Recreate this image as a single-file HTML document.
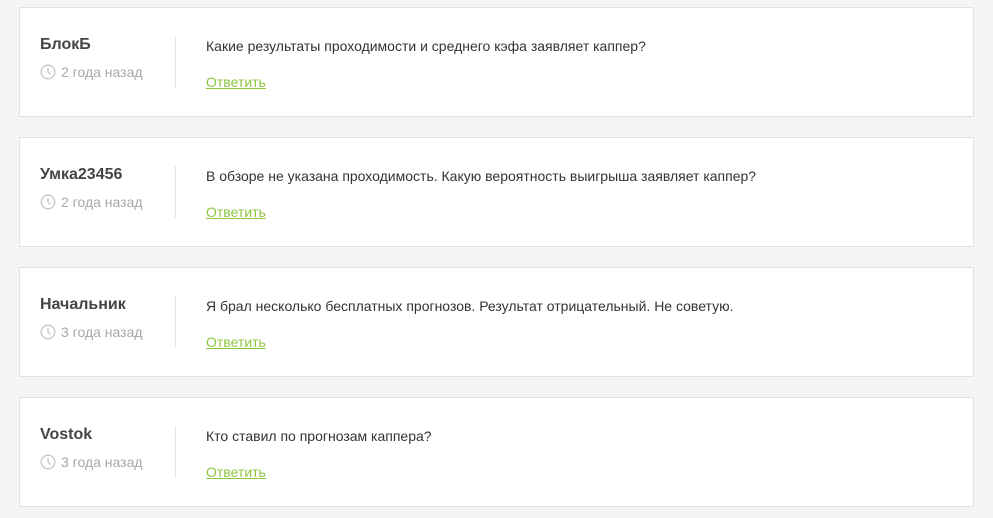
<!DOCTYPE html>
<html><head><meta charset="utf-8"><style>
body{margin:0;background:#f5f5f5;font-family:"Liberation Sans","Noto Sans CJK SC",sans-serif;width:993px;height:518px;overflow:hidden}
.card{position:absolute;left:19px;width:953px;height:108px;background:#fff;border:1px solid #e2e2e2}
.name{position:absolute;left:20px;top:28px;font-size:16px;font-weight:bold;color:#444}
.time{position:absolute;left:20px;top:56px;font-size:14px;color:#a8a8a8;display:flex;align-items:center}
.time svg{margin-right:5px}
.div{position:absolute;left:155px;top:28px;width:1px;height:52px;background:#e5e5e5}
.text{position:absolute;left:186px;top:30px;font-size:14px;color:#333}
.reply{position:absolute;left:186px;top:66px;font-size:14px;color:#8cc63f;text-decoration:underline}
</style></head><body>
<div class="card" style="top:7px"><div class="name">БлокБ</div><div class="time"><svg width="16" height="16" viewBox="0 0 16 16"><circle cx="8" cy="8" r="6.8" fill="none" stroke="#c8c8c8" stroke-width="1.4"/><path d="M8 4v4l2.5 2.5" fill="none" stroke="#c8c8c8" stroke-width="1.4"/></svg>2 года назад</div><div class="div"></div><div class="text">Какие результаты проходимости и среднего кэфа заявляет каппер?</div><div class="reply">Ответить</div></div>
<div class="card" style="top:137px"><div class="name">Умка23456</div><div class="time"><svg width="16" height="16" viewBox="0 0 16 16"><circle cx="8" cy="8" r="6.8" fill="none" stroke="#c8c8c8" stroke-width="1.4"/><path d="M8 4v4l2.5 2.5" fill="none" stroke="#c8c8c8" stroke-width="1.4"/></svg>2 года назад</div><div class="div"></div><div class="text">В обзоре не указана проходимость. Какую вероятность выигрыша заявляет каппер?</div><div class="reply">Ответить</div></div>
<div class="card" style="top:267px"><div class="name">Начальник</div><div class="time"><svg width="16" height="16" viewBox="0 0 16 16"><circle cx="8" cy="8" r="6.8" fill="none" stroke="#c8c8c8" stroke-width="1.4"/><path d="M8 4v4l2.5 2.5" fill="none" stroke="#c8c8c8" stroke-width="1.4"/></svg>3 года назад</div><div class="div"></div><div class="text">Я брал несколько бесплатных прогнозов. Результат отрицательный. Не советую.</div><div class="reply">Ответить</div></div>
<div class="card" style="top:397px"><div class="name">Vostok</div><div class="time"><svg width="16" height="16" viewBox="0 0 16 16"><circle cx="8" cy="8" r="6.8" fill="none" stroke="#c8c8c8" stroke-width="1.4"/><path d="M8 4v4l2.5 2.5" fill="none" stroke="#c8c8c8" stroke-width="1.4"/></svg>3 года назад</div><div class="div"></div><div class="text">Кто ставил по прогнозам каппера?</div><div class="reply">Ответить</div></div>
</body></html>
